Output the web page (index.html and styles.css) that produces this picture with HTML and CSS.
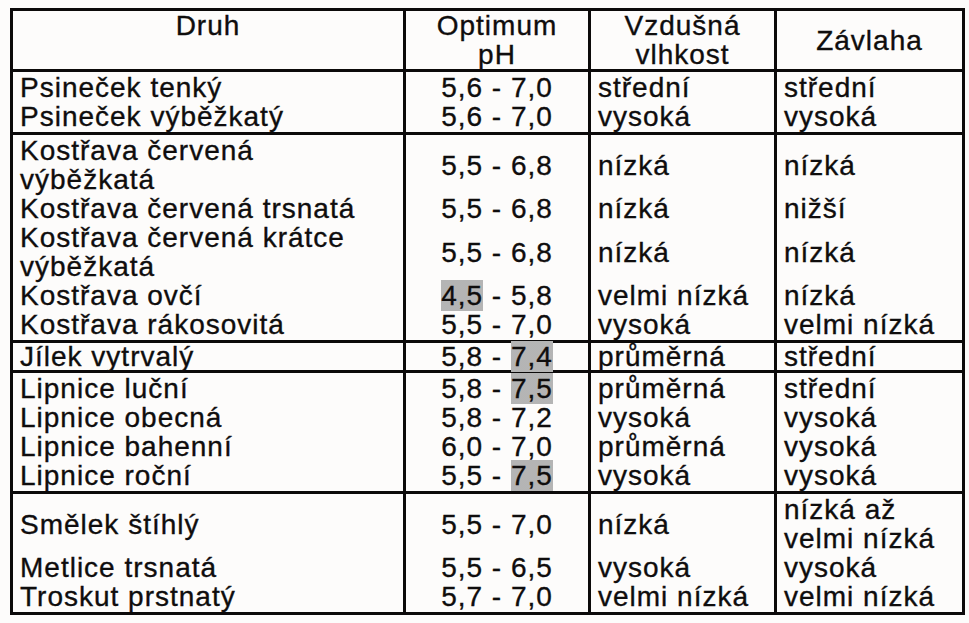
FILE: index.html
```html
<!DOCTYPE html>
<html lang="cs">
<head>
<meta charset="utf-8">
<title>Druhy trav</title>
<link rel="stylesheet" href="styles.css">
</head>
<body>
<table class="tbl">
<colgroup><col class="c1"><col class="c2"><col class="c3"><col class="c4"></colgroup>
<thead>
<tr><th class="top">Druh</th><th>Optimum<br>pH</th><th>Vzdušná<br>vlhkost</th><th>Závlaha</th></tr>
</thead>
<tbody>
<tr><td>Psineček tenký</td><td class="ph">5,6 - 7,0</td><td>střední</td><td>střední</td></tr>
<tr><td>Psineček výběžkatý</td><td class="ph">5,6 - 7,0</td><td>vysoká</td><td>vysoká</td></tr>
</tbody>
<tbody>
<tr><td>Kostřava červená<br>výběžkatá</td><td class="ph">5,5 - 6,8</td><td>nízká</td><td>nízká</td></tr>
<tr><td>Kostřava červená trsnatá</td><td class="ph">5,5 - 6,8</td><td>nízká</td><td>nižší</td></tr>
<tr><td>Kostřava červená krátce<br>výběžkatá</td><td class="ph">5,5 - 6,8</td><td>nízká</td><td>nízká</td></tr>
<tr><td>Kostřava ovčí</td><td class="ph"><span class="hl">4,5</span> - 5,8</td><td>velmi nízká</td><td>nízká</td></tr>
<tr><td>Kostřava rákosovitá</td><td class="ph">5,5 - 7,0</td><td>vysoká</td><td>velmi nízká</td></tr>
</tbody>
<tbody class="short">
<tr><td>Jílek vytrvalý</td><td class="ph">5,8 - <span class="hl">7,4</span></td><td>průměrná</td><td>střední</td></tr>
</tbody>
<tbody>
<tr><td>Lipnice luční</td><td class="ph">5,8 - <span class="hl">7,5</span></td><td>průměrná</td><td>střední</td></tr>
<tr><td>Lipnice obecná</td><td class="ph">5,8 - 7,2</td><td>vysoká</td><td>vysoká</td></tr>
<tr><td>Lipnice bahenní</td><td class="ph">6,0 - 7,0</td><td>průměrná</td><td>vysoká</td></tr>
<tr><td>Lipnice roční</td><td class="ph">5,5 - <span class="hl">7,5</span></td><td>vysoká</td><td>vysoká</td></tr>
</tbody>
<tbody>
<tr><td>Smělek štíhlý</td><td class="ph">5,5 - 7,0</td><td>nízká</td><td>nízká až<br>velmi nízká</td></tr>
<tr><td>Metlice trsnatá</td><td class="ph">5,5 - 6,5</td><td>vysoká</td><td>vysoká</td></tr>
<tr><td>Troskut prstnatý</td><td class="ph">5,7 - 7,0</td><td>velmi nízká</td><td>velmi nízká</td></tr>
</tbody>
</table>
</body>
</html>
```
FILE: styles.css
```css
html, body {
  margin: 0;
  padding: 0;
  background: #fdfcfb;
}
body {
  padding: 8px 0 0 10px;
}
.tbl {
  border-collapse: collapse;
  table-layout: fixed;
  width: 952px;
  border: 3px solid #0c0a0a;
  font-family: "Liberation Sans", Arial, sans-serif;
  font-size: 28px;
  letter-spacing: 1px;
  line-height: 29px;
  color: #0f0d0d;
  -webkit-text-stroke: 0.35px #0f0d0d;
}
.c1 { width: 393px; }
.c2 { width: 185px; }
.c3 { width: 186px; }
.c4 { width: 188px; }
.tbl th, .tbl td {
  border-left: 3px solid #0c0a0a;
  border-right: 3px solid #0c0a0a;
  vertical-align: middle;
  padding: 0 0 0 7px;
  text-align: left;
  white-space: nowrap;
}
.tbl th {
  font-weight: normal;
  text-align: center;
  padding: 0;
  height: 58px;
  border-bottom: 3px solid #0c0a0a;
}
.tbl th.top {
  vertical-align: top;
}
.tbl tbody {
  border-top: 3px solid #0c0a0a;
}
.tbl tbody tr:first-child td { padding-top: 1px; }
.tbl tbody tr:last-child td { padding-bottom: 1px; }
.tbl td.ph {
  text-align: center;
  padding-left: 0;
}
.tbl tbody.short td {
  line-height: 25px;
}
.hl {
  background-color: #cfcfcf;
  background-image: radial-gradient(circle, #a6a6a6 0.6px, transparent 0.9px);
  background-size: 2px 2px;
}
```
